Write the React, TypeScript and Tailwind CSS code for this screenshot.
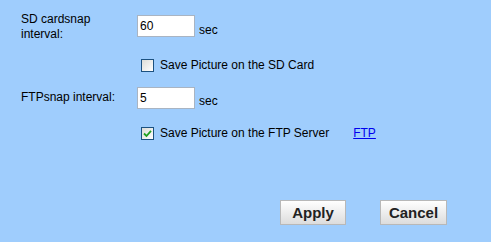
import React from 'react';

const Check: React.FC<{ checked?: boolean }> = ({ checked }) => (
  <span className="flex h-[13px] w-[13px] shrink-0 items-center justify-center border border-[#1c5180] bg-gradient-to-br from-[#dcdcd7] to-white">
    {checked && (
      <svg width="9" height="9" viewBox="0 0 9 9">
        <path d="M1 4.5 L3.5 7 L8 1.8" fill="none" stroke="#21a121" strokeWidth="1.8" />
      </svg>
    )}
  </span>
);

const Btn: React.FC<{ children: React.ReactNode; w: string }> = ({ children, w }) => (
  <button
    className={`h-[25px] ${w} border border-[#b8b8b8] bg-gradient-to-b from-white to-[#dcdcdc] text-[15px] font-bold leading-none text-[#222]`}
  >
    {children}
  </button>
);

export default function App() {
  return (
    <div
      className="h-[242px] w-[491px] bg-[#9fcdfd] text-[12px] leading-[15px] text-black"
      style={{ fontFamily: '"Liberation Sans", Arial, sans-serif' }}
    >
      {/* SD card row */}
      <div className="flex pt-[12px]">
        <div className="w-[137px] pl-[21px] pr-[10px]">SD cardsnap interval:</div>
        <input
          className="mt-[3px] h-[22px] w-[58px] border border-[#a9b4c2] bg-white px-[2px] text-[12px] outline-none"
          defaultValue="60"
        />
        <span className="ml-[4px] pt-[11px]">sec</span>
      </div>

      <div className="mt-[16px] flex h-[15px] items-center pl-[141px]">
        <Check />
        <span className="ml-[6px]">Save Picture on the SD Card</span>
      </div>

      {/* FTP row */}
      <div className="mt-[14px] flex">
        <div className="w-[137px] pl-[21px] pt-[3px]">FTPsnap interval:</div>
        <input
          className="h-[22px] w-[58px] border border-[#a9b4c2] bg-white px-[2px] text-[12px] outline-none"
          defaultValue="5"
        />
        <span className="ml-[4px] pt-[7px]">sec</span>
      </div>

      <div className="mt-[17px] flex h-[15px] items-center pl-[141px]">
        <Check checked />
        <span className="ml-[6px]">Save Picture on the FTP Server</span>
        <a className="ml-[24px] text-[#0000ee] underline" href="#">
          FTP
        </a>
      </div>

      <div className="mt-[59px] flex pl-[280px]">
        <Btn w="w-[66px]">Apply</Btn>
        <div className="w-[34px]" />
        <Btn w="w-[67px]">Cancel</Btn>
      </div>
    </div>
  );
}
